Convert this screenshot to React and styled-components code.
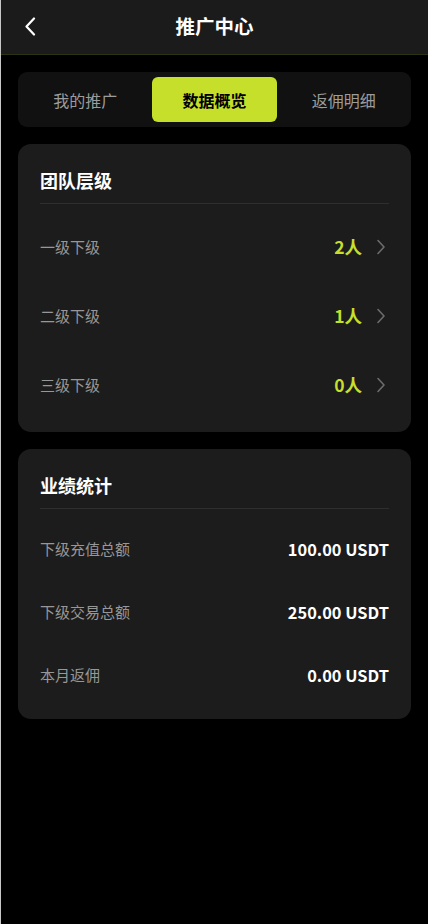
import styled, { createGlobalStyle } from "styled-components";
import { useState } from "react";

const GlobalStyle = createGlobalStyle`
  html, body {
    margin: 0;
    padding: 0;
    background: #000;
  }
  body {
    font-family: "Noto Sans CJK SC", "Noto Sans", sans-serif;
  }
  * {
    box-sizing: border-box;
  }
`;

const Page = styled.div`
  min-height: 924px;
  background: #000;
  border-left: 1px solid #c8c8c8;
  color: #fff;
`;

const Header = styled.header`
  height: 55px;
  display: flex;
  align-items: center;
  justify-content: center;
  position: relative;
  background: #1b1b1b;
  border-bottom: 1px solid #2b3312;
  h1 {
    margin: 0;
    font-size: 19.5px;
    font-weight: 700;
    line-height: 1;
    transform: translateY(-1px);
  }
`;

const BackButton = styled.button`
  position: absolute;
  left: 18px;
  top: 14px;
  width: 22px;
  height: 24px;
  padding: 0;
  background: none;
  border: none;
  display: flex;
  align-items: center;
  justify-content: center;
  cursor: pointer;
`;

const Content = styled.main`
  padding: 17px 17px 0;
  display: flex;
  flex-direction: column;
  gap: 17px;
`;

const Tabs = styled.div`
  display: grid;
  grid-template-columns: repeat(3, 1fr);
  gap: 5px;
  padding: 5px;
  background: #111;
  border-radius: 9px;
`;

const Tab = styled.button`
  height: 45px;
  border: none;
  border-radius: 6px;
  font-family: inherit;
  font-size: 16px;
  font-weight: ${(p) => (p.$active ? 700 : 400)};
  color: ${(p) => (p.$active ? "#000" : "#9c9c9c")};
  background: ${(p) => (p.$active ? "#c5df2b" : "transparent")};
  cursor: pointer;
`;

const Card = styled.section`
  background: #1c1c1c;
  border-radius: 13px;
  padding: 22px 22px 13px;
`;

const CardTitle = styled.h2`
  margin: 0;
  font-size: 18px;
  font-weight: 700;
  line-height: 28px;
  padding-bottom: 9px;
  border-bottom: 1px solid #2e2e2e;
`;

const List = styled.div`
  margin-top: 8px;
  display: flex;
  flex-direction: column;
`;

const Row = styled.div`
  height: ${(p) => p.$h}px;
  display: flex;
  align-items: center;
  justify-content: space-between;
`;

const Label = styled.span`
  font-size: 15px;
  color: #979797;
`;

const Count = styled.span`
  display: flex;
  align-items: center;
  gap: 11px;
  font-size: 17.5px;
  font-weight: 700;
  color: #c5df2b;
`;

const Amount = styled.span`
  font-size: 16.4px;
  font-weight: 700;
  color: #fff;
`;

const Chevron = () => (
  <svg width="16" height="16" viewBox="0 0 16 16" fill="none">
    <polyline points="5,1.5 11,8 5,14.5" stroke="#6c6c6c" strokeWidth="1.6" strokeLinecap="round" strokeLinejoin="round" />
  </svg>
);

const levels = [
  { label: "一级下级", value: "2人" },
  { label: "二级下级", value: "1人" },
  { label: "三级下级", value: "0人" },
];

const stats = [
  { label: "下级充值总额", value: "100.00 USDT" },
  { label: "下级交易总额", value: "250.00 USDT" },
  { label: "本月返佣", value: "0.00 USDT" },
];

const tabs = ["我的推广", "数据概览", "返佣明细"];

const App = () => {
  const [active, setActive] = useState(1);

  return (
    <>
      <GlobalStyle />
      <Page>
        <Header>
          <BackButton type="button">
            <svg width="12" height="19" viewBox="0 0 12 19" fill="none">
              <polyline points="10,1.5 2.5,9.5 10,17.5" stroke="#fff" strokeWidth="2.2" strokeLinecap="round" strokeLinejoin="round" />
            </svg>
          </BackButton>
          <h1>推广中心</h1>
        </Header>
        <Content>
          <Tabs>
            {tabs.map((t, i) => (
              <Tab key={t} type="button" $active={i === active} onClick={() => setActive(i)}>
                {t}
              </Tab>
            ))}
          </Tabs>

          <Card>
            <CardTitle>团队层级</CardTitle>
            <List>
              {levels.map((l) => (
                <Row key={l.label} $h={69}>
                  <Label>{l.label}</Label>
                  <Count>
                    {l.value}
                    <Chevron />
                  </Count>
                </Row>
              ))}
            </List>
          </Card>

          <Card>
            <CardTitle>业绩统计</CardTitle>
            <List>
              {stats.map((s) => (
                <Row key={s.label} $h={63}>
                  <Label>{s.label}</Label>
                  <Amount>{s.value}</Amount>
                </Row>
              ))}
            </List>
          </Card>
        </Content>
      </Page>
    </>
  );
};

export default App;
